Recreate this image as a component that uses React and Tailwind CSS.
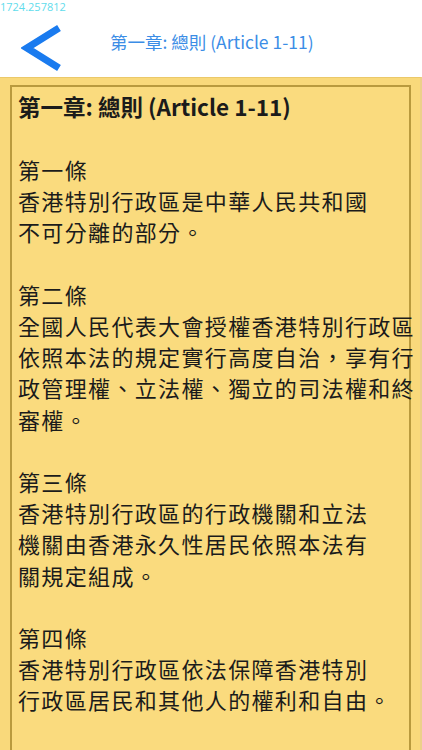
const CJK = { fontFamily: '"Noto Sans CJK TC", "Noto Sans", sans-serif' }

const articles = [
  { head: '第一條', lines: ['香港特別行政區是中華人民共和國', '不可分離的部分。'] },
  {
    head: '第二條',
    lines: [
      '全國人民代表大會授權香港特別行政區',
      '依照本法的規定實行高度自治，享有行',
      '政管理權、立法權、獨立的司法權和終',
      '審權。',
    ],
  },
  {
    head: '第三條',
    lines: ['香港特別行政區的行政機關和立法', '機關由香港永久性居民依照本法有', '關規定組成。'],
  },
  { head: '第四條', lines: ['香港特別行政區依法保障香港特別', '行政區居民和其他人的權利和自由。'] },
]

function BackChevron() {
  return (
    <svg width="42" height="46" viewBox="0 0 42 46" className="shrink-0">
      <path d="M38 3 L6 23 L38 43" fill="none" stroke="#1a7bef" strokeWidth="7" strokeLinejoin="miter" />
    </svg>
  )
}

export default function App() {
  return (
    <div className="w-[422px] h-[750px] overflow-hidden bg-white" style={CJK}>
      {/* header */}
      <div className="relative h-[77px] bg-white">
        <span className="absolute left-0 top-[1px] text-[11px] leading-none text-[#5fdcec]"
          style={{ fontFamily: '"Open Sans", "Noto Sans", sans-serif' }}>
          1724.257812
        </span>
        <div className="flex items-start h-full pl-[21px]">
          <div className="mt-[25px]"><BackChevron /></div>
          <h1 className="ml-[47px] mt-[29px] text-[17.5px] leading-[26px] text-[#3b8de6] whitespace-nowrap">
            第一章: 總則 (Article 1-11)
          </h1>
        </div>
      </div>

      {/* body */}
      <div className="h-[673px] bg-[#f9d97b] border-t border-[#ebc96a] border-r-2 border-r-[#ecd08a] pl-[10px] pr-[9px] pt-[7px]">
        <div className="h-[700px] border-2 border-[#b99a3e] bg-[#fadb7e] pl-[6px] pt-[4px] text-[#1b1b1b]">
          <p className="text-[22.5px] font-bold leading-[31.5px] whitespace-nowrap">第一章: 總則 (Article 1-11)</p>
          <div className="h-[31.5px]" />
          {articles.map(a => (
            <div key={a.head} className="text-[22px] leading-[31.2px] tracking-[1.35px] whitespace-nowrap">
              <p>{a.head}</p>
              {a.lines.map(l => <p key={l}>{l}</p>)}
              <div className="h-[31.2px]" />
            </div>
          ))}
        </div>
      </div>
    </div>
  )
}
